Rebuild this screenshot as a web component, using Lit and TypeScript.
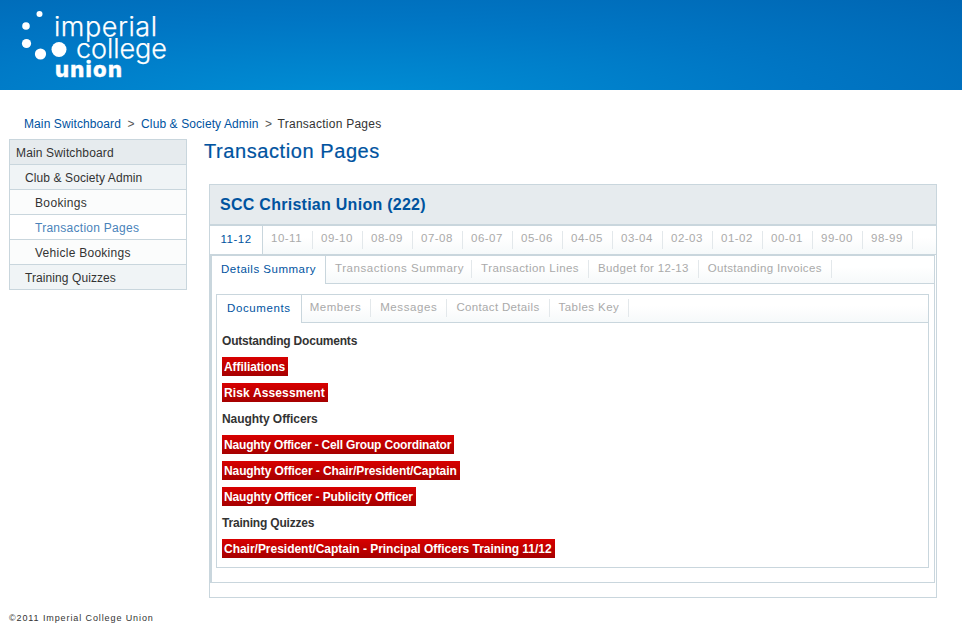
import { LitElement, html, css } from "lit";
import { customElement } from "lit/decorators.js";

type Item = [string, number];

const years = ["10-11","09-10","08-09","07-08","06-07","05-06","04-05","03-04","02-03","01-02","00-01","99-00","98-99"];
const subTabs: Item[] = [["Transactions Summary",0.56],["Transaction Lines",0.45],["Budget for 12-13",0.31],["Outstanding Invoices",0.33]];
const innerTabs: Item[] = [["Members",0.5],["Messages",0.6],["Contact Details",0.34],["Tables Key",0.45]];
const nav: [string, string, number][] = [
  ["l1","Main Switchboard",0.15],
  ["l2","Club & Society Admin",0.1],
  ["l3","Bookings",0.35],
  ["l3 cur","Transaction Pages",0.27],
  ["l3","Vehicle Bookings",0.27],
  ["l2","Training Quizzes",0.08],
];
const sections: { title: string; ls: number; items: Item[] }[] = [
  { title: "Outstanding Documents", ls: -0.2, items: [["Affiliations",-0.08],["Risk Assessment",0.13]] },
  { title: "Naughty Officers", ls: -0.06, items: [["Naughty Officer - Cell Group Coordinator",-0.17],["Naughty Officer - Chair/President/Captain",-0.1],["Naughty Officer - Publicity Officer",-0.11]] },
  { title: "Training Quizzes", ls: -0.19, items: [["Chair/President/Captain - Principal Officers Training 11/12",-0.02]] },
];
const ls = (v: number) => `letter-spacing:${v}px`;

@customElement("app-root")
export class AppRoot extends LitElement {
  static styles = css`
    :host { display: block; width: 962px; height: 630px; overflow: hidden; background: #fff;
      font-family: "Liberation Sans", Arial, sans-serif; font-size: 11px; letter-spacing: 0.5px; color: #333; }
    .banner { height: 90px; background: radial-gradient(ellipse 850px 150px at 36% 115%, #0090d6 0%, #0076c4 55%, #0066b3 100%); }
    .banner svg { display: block; }
    .crumbs { height: 20px; margin-top: 24px; padding-left: 24px; display: flex; align-items: center; font-size: 12px; letter-spacing: 0.1px; }
    .crumbs a { color: #00539f; }
    .crumbs span { margin: 0 6.5px; color: #555; }
    .crumbs span:last-of-type { margin-right: 5.5px; }
    .crumbs b { font-weight: normal; color: #333; letter-spacing: 0.25px; }
    .main { display: flex; padding-left: 9px; margin-top: 5px; height: 465px; }
    .nav { width: 178px; flex: none; box-sizing: border-box; border: 1px solid #c9d6dd; border-bottom: none; align-self: flex-start; }
    .nav div { height: 25px; box-sizing: border-box; line-height: 26px; border-bottom: 1px solid #c9d6dd; font-size: 12px; }
    .l1 { padding-left: 6px; background: #e6ebee; }
    .l2 { padding-left: 15px; background: #f0f4f6; }
    .l3 { padding-left: 25px; background: #fbfcfc; }
    .nav .cur { background: #fff; color: #4a83ba; }
    .content { margin-left: 17px; flex: 1; min-width: 0; }
    h1 { margin: 0; font-size: 20px; line-height: 24px; font-weight: normal; color: #00539f; letter-spacing: 0.58px; -webkit-text-stroke: 0.2px #00539f; }
    .box { margin: 21px 0 0 5px; width: 728px; height: 414px; box-sizing: border-box; border: 1px solid #c9d6dd; }
    .boxhead { height: 41px; box-sizing: border-box; background: #e6ebee; border-bottom: 2px solid #c9d6dd; line-height: 40px; padding-left: 10px;
      font-size: 16px; font-weight: bold; color: #00539f; letter-spacing: 0.27px; }
    .tabs { display: flex; align-items: flex-start; box-sizing: border-box; background: linear-gradient(#fff 40%, #f6f9fa); border-bottom: 1px solid #c9d6dd; }
    .tab { height: 18px; margin-top: 4px; line-height: 17px; padding: 0 9px; border-right: 1px solid #e3e8eb; color: #aaa; white-space: nowrap; font-size: 11.5px; }
    .tab.on { margin-top: 0; height: auto; align-self: stretch; color: #00539f; background: #fff; border-right: 1px solid #c9d6dd; margin-bottom: -1px; line-height: 26px; }
    .years { height: 29px; }
    .years .tab { width: 31px; margin-top: 5px; line-height: 15px; padding: 0 10px 0 8px; text-align: center; }
    .years .tab.on { width: 32px; margin-top: 0; margin-bottom: 0; line-height: 27px; padding: 0 10px; }
    .panel { height: 328px; box-sizing: border-box; border: 1px solid #c9d6dd; border-left-width: 2px; margin-right: 1px; }
    .sub { height: 28px; }
    .sub .tab.on { padding: 0 9px; }
    .sub .tab.on + .tab { padding-right: 7px; }
    .inner { margin: 10px 5px 0 4px; height: 274px; box-sizing: border-box; border: 1px solid #c9d6dd; }
    .itabs { height: 28px; }
    .itabs .tab.on { padding: 0 10px; letter-spacing: 0.62px; }
    .itabs .tab.on + .tab { padding-left: 8px; }
    .body { padding: 8px 5px; }
    h3 { margin: 0 0 8px; height: 18px; font-size: 12px; line-height: 20px; font-weight: bold; color: #333; }
    .bad { width: fit-content; height: 19px; line-height: 20px; margin-bottom: 7px; padding: 0 3px 0 2px; font-size: 12px; font-weight: bold; color: #fff;
      background: linear-gradient(#d80000, #a60000); }
    .foot { padding-left: 9px; margin-top: 8px; font-size: 9px; letter-spacing: 0.9px; color: #333; line-height: 12px; }
    .logo-l { font-family: Inter, sans-serif; font-size: 27px; font-weight: 300; letter-spacing: 0; stroke: #fff; stroke-width: 0.25px; }
    .logo-b { font-family: Inter, sans-serif; font-size: 22px; font-weight: 800; letter-spacing: 0; stroke: #fff; stroke-width: 0.4px; }
  `;

  render() {
    return html`
      <div class="banner">
        <svg width="240" height="90" viewBox="0 0 240 90" fill="#fff">
          <circle cx="39.5" cy="14" r="3"></circle>
          <circle cx="26" cy="26" r="3.8"></circle>
          <circle cx="26.5" cy="43.5" r="4.6"></circle>
          <circle cx="40.5" cy="54" r="5.6"></circle>
          <circle cx="59" cy="49.5" r="7.5"></circle>
          <text class="logo-l" x="54" y="36" textLength="103">imperial</text>
          <text class="logo-l" x="76" y="57.5" textLength="91">college</text>
          <text class="logo-b" x="55" y="77" textLength="67">union</text>
        </svg>
      </div>
      <div class="crumbs"><a>Main Switchboard</a><span>&gt;</span><a>Club &amp; Society Admin</a><span>&gt;</span><b>Transaction Pages</b></div>
      <div class="main">
        <div class="nav">
          ${nav.map(([c, t, v]) => html`<div class=${c} style=${ls(v)}>${t}</div>`)}
        </div>
        <div class="content">
          <h1>Transaction Pages</h1>
          <div class="box">
            <div class="boxhead">SCC Christian Union (222)</div>
            <div class="tabs years">
              <div class="tab on">11-12</div>
              ${years.map((y) => html`<div class="tab">${y}</div>`)}
            </div>
            <div class="panel">
              <div class="tabs sub">
                <div class="tab on">Details Summary</div>
                ${subTabs.map(([t, v]) => html`<div class="tab" style=${ls(v)}>${t}</div>`)}
              </div>
              <div class="inner">
                <div class="tabs itabs">
                  <div class="tab on">Documents</div>
                  ${innerTabs.map(([t, v]) => html`<div class="tab" style=${ls(v)}>${t}</div>`)}
                </div>
                <div class="body">
                  ${sections.map((s) => html`
                    <h3 style=${ls(s.ls)}>${s.title}</h3>
                    ${s.items.map(([t, v]) => html`<div class="bad" style=${ls(v)}>${t}</div>`)}
                  `)}
                </div>
              </div>
            </div>
          </div>
        </div>
      </div>
      <div class="foot">©2011 Imperial College Union</div>
    `;
  }
}
